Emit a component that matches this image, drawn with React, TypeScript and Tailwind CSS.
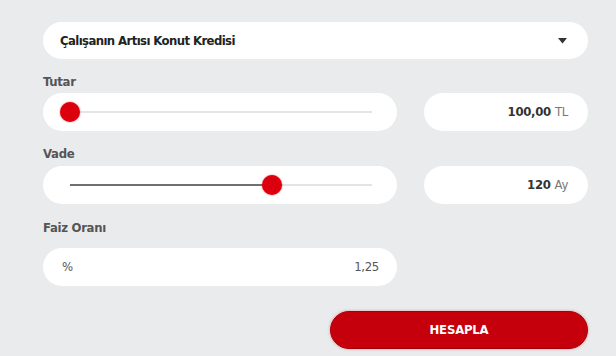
import React from 'react';

const font = { fontFamily: '"DejaVu Sans Condensed", "Liberation Sans", sans-serif' };

function Label({ children }: { children: React.ReactNode }) {
  return <div className="h-4 text-[13px] leading-4 text-[#555] font-semibold tracking-[-0.3px]">{children}</div>;
}

function Slider({ percent }: { percent: number }) {
  return (
    <div className="flex h-[38px] w-[354px] items-center rounded-full bg-white pl-[27px] pr-[25px]">
      <div className="relative h-[2px] flex-1 bg-[#e4e4e4]">
        <div className="absolute left-0 top-0 h-[2px] bg-[#707070]" style={{ width: `${percent}%` }} />
        <div
          className="absolute top-1/2 h-5 w-5 -translate-x-1/2 -translate-y-1/2 rounded-full bg-[#dc000f] shadow-[0_0_2px_rgba(200,0,0,0.6)]"
          style={{ left: `${percent}%` }}
        />
      </div>
    </div>
  );
}

function ValueBox({ value, unit }: { value: string; unit: string }) {
  return (
    <div className="flex h-[38px] w-[164px] items-center justify-end rounded-full bg-white pr-[20px] text-[13px] tracking-[-0.3px]">
      <span className="font-bold text-[#333]">{value}</span>
      <span className="ml-[4px] text-[#777]">{unit}</span>
    </div>
  );
}

export default function App() {
  return (
    <div className="h-[356px] w-[616px] bg-[#e9ebed] pl-[43px] pr-[28px] pt-[22px]" style={font}>
      {/* Kredi türü */}
      <div className="flex h-[37px] items-center justify-between rounded-full bg-white pl-[17px] pr-[21px]">
        <span className="whitespace-nowrap text-[13px] font-semibold tracking-[-0.6px] text-[#222]">
          Çalışanın Artısı Konut Kredisi
        </span>
        <svg width="9" height="6" viewBox="0 0 9 6">
          <path d="M0 0h9L4.5 5.5z" fill="#333" />
        </svg>
      </div>

      <div className="mt-[15px]">
        <Label>Tutar</Label>
      </div>
      <div className="mt-[3px] flex justify-between">
        <Slider percent={0} />
        <ValueBox value="100,00" unit="TL" />
      </div>

      <div className="mt-[15px]">
        <Label>Vade</Label>
      </div>
      <div className="mt-[4px] flex justify-between">
        <Slider percent={67} />
        <ValueBox value="120" unit="Ay" />
      </div>

      <div className="mt-[16px]">
        <Label>Faiz Oranı</Label>
      </div>
      <div className="mt-[12px] flex h-[38px] w-[354px] items-center justify-between rounded-full bg-white pl-[19px] pr-[18px] text-[13px] tracking-[-0.3px] text-[#555]">
        <span>%</span>
        <span>1,25</span>
      </div>

      <div className="mt-[25px] flex justify-end">
        <button className="h-[38px] w-[258px] rounded-full border border-[#a8000a] bg-[#c5000c] text-[13px] font-bold tracking-[-0.2px] text-white shadow-[0_0_3px_rgba(220,60,60,0.5)]">
          HESAPLA
        </button>
      </div>
    </div>
  );
}
